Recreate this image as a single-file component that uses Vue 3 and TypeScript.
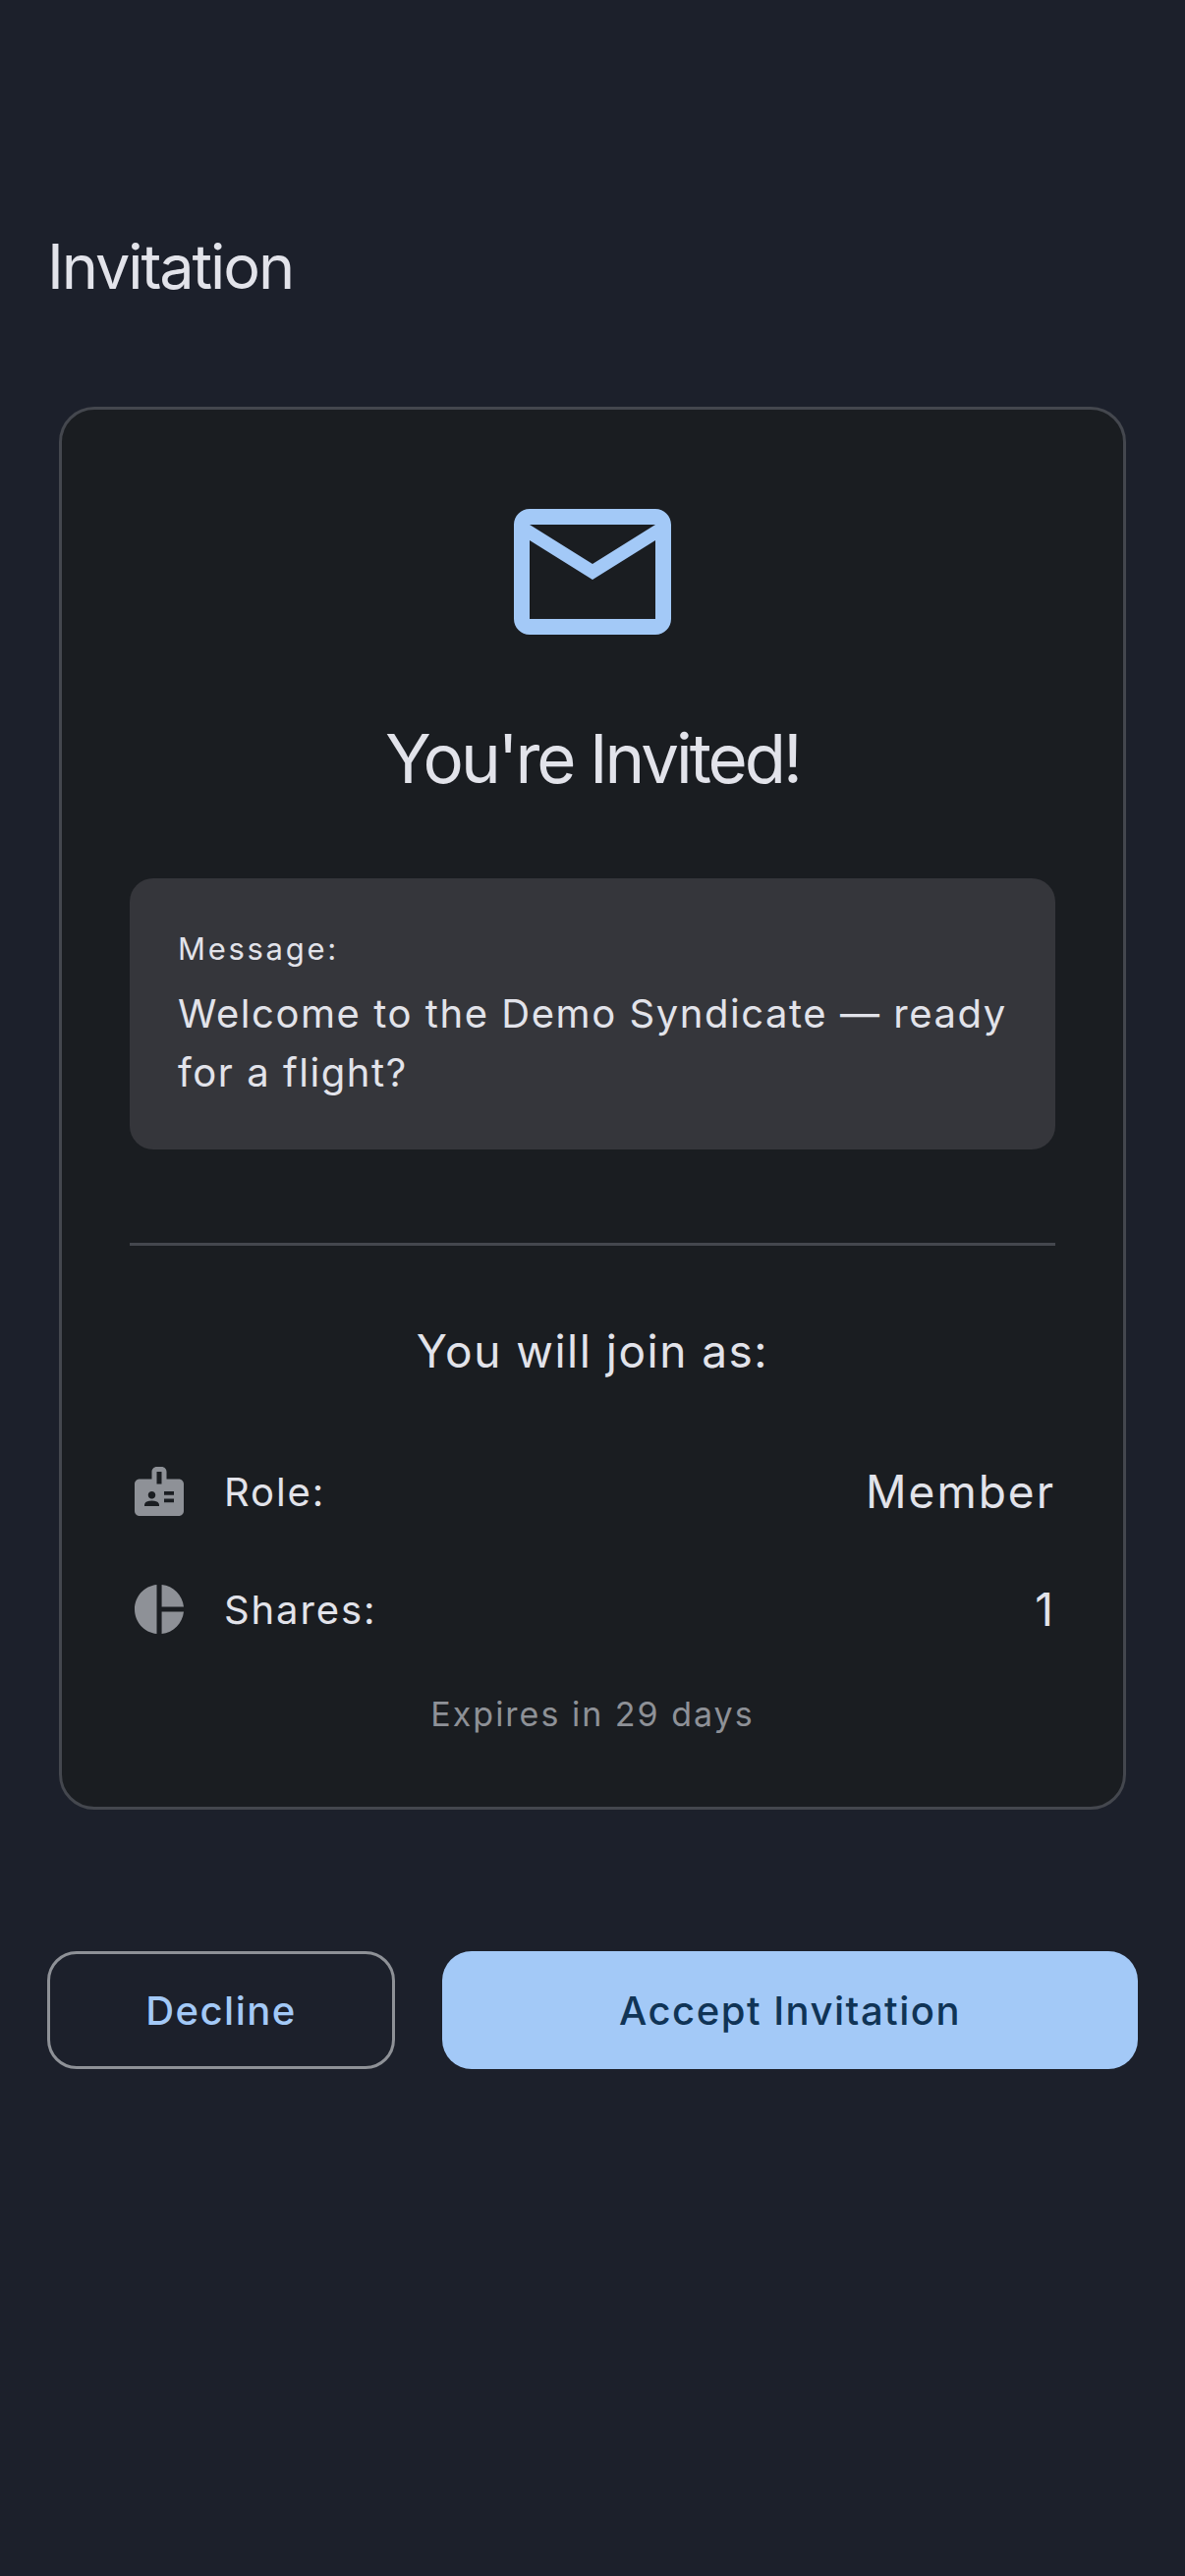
<template>
  <div class="page">
    <h1 class="title">Invitation</h1>

    <div class="card">
      <svg class="mail" viewBox="0 0 24 24">
        <path d="M20 4H4c-1.1 0-2 .9-2 2v12c0 1.1.9 2 2 2h16c1.1 0 2-.9 2-2V6c0-1.1-.9-2-2-2zm0 14H4V8l8 5 8-5v10zm-8-7L4 6h16l-8 5z" />
      </svg>
      <h2 class="heading">You're Invited!</h2>

      <div class="message">
        <div class="message-label">Message:</div>
        <div class="message-text">Welcome to the Demo Syndicate — ready for a flight?</div>
      </div>

      <div class="divider"></div>

      <div class="join">You will join as:</div>

      <div v-for="row in rows" :key="row.label" class="row">
        <svg class="row-icon" viewBox="0 0 24 24"><path :d="row.icon" /></svg>
        <span class="row-label">{{ row.label }}</span>
        <span class="row-value">{{ row.value }}</span>
      </div>

      <div class="expires">Expires in 29 days</div>
    </div>

    <div class="actions">
      <button class="btn decline">Decline</button>
      <button class="btn accept">Accept Invitation</button>
    </div>
  </div>
</template>

<script setup lang="ts">
const rows = [
  {
    label: "Role:",
    value: "Member",
    icon: "M20 7h-5V4c0-1.1-.9-2-2-2h-2c-1.1 0-2 .9-2 2v3H4c-1.1 0-2 .9-2 2v11c0 1.1.9 2 2 2h16c1.1 0 2-.9 2-2V9c0-1.1-.9-2-2-2zM9 12c.83 0 1.5.67 1.5 1.5S9.83 15 9 15s-1.5-.67-1.5-1.5S8.17 12 9 12zm3 6H6v-.43c0-.6.36-1.15.92-1.39.64-.28 1.34-.43 2.08-.43s1.44.15 2.08.43c.55.24.92.78.92 1.39V18zm1-9h-2V4h2v5zm5 7.5h-4V15h4v1.5zm0-3h-4V12h4v1.5z",
  },
  {
    label: "Shares:",
    value: "1",
    icon: "M11 2v20c-5.07-.5-9-4.79-9-10s3.93-9.5 9-10zm2.03 0v8.99H22c-.47-4.74-4.24-8.52-8.97-8.99zm0 11.01V22c4.74-.47 8.5-4.25 8.97-8.99h-8.97z",
  },
];
</script>

<style>
html,
body {
  margin: 0;
  background: #1c202b;
}
</style>

<style scoped>
.page {
  width: 1206px;
  height: 2622px;
  box-sizing: border-box;
  padding: 227px 48px 0;
  background: #1c202b;
  font-family: Inter, "Noto Sans", sans-serif;
  color: #e2e3ea;
}

.title {
  margin: 0 0 97px;
  font-size: 63px;
  line-height: 88px;
  font-weight: 400;
  letter-spacing: -2.1px;
  padding-bottom: 2px;
}

/* CARD */
.card {
  margin: 0 12px;
  height: 1428px;
  box-sizing: border-box;
  padding: 69px 69px 0;
  background: #1a1d21;
  border: 3px solid #44474e;
  border-radius: 36px;
  display: flex;
  flex-direction: column;
}

.mail {
  width: 192px;
  height: 192px;
  align-self: center;
  fill: #a3c9f7;
  flex: none;
}

.heading {
  margin: 46px 0 74px;
  font-size: 69px;
  line-height: 96px;
  font-weight: 400;
  letter-spacing: -3px;
  text-align: center;
}

/* MESSAGE */
.message {
  height: 276px;
  box-sizing: border-box;
  padding: 54px 44px 0 49px;
  background: #35363b;
  border-radius: 24px;
  flex: none;
}

.message-label {
  font-size: 31px;
  line-height: 36px;
  letter-spacing: 2.7px;
  margin-bottom: 18px;
}

.message-text {
  font-size: 40px;
  line-height: 60px;
  letter-spacing: 1.55px;
}

.divider {
  height: 3px;
  background: #44474e;
  margin: 95px 0 74px;
  flex: none;
}

.join {
  font-size: 46px;
  line-height: 66px;
  letter-spacing: 1.5px;
  text-align: center;
  margin-bottom: 74px;
}

/* ROWS */
.row {
  display: flex;
  align-items: center;
  height: 72px;
  margin-bottom: 48px;
}

.row-icon {
  width: 60px;
  height: 60px;
  fill: #8e9197;
  margin-right: 36px;
  flex: none;
}

.row-label {
  flex: 1;
  font-size: 40px;
  letter-spacing: 1.9px;
}

.row-value {
  font-size: 46px;
  letter-spacing: 2px;
}

.expires {
  font-size: 34px;
  line-height: 48px;
  letter-spacing: 2px;
  text-align: center;
  color: #8e9197;
  margin-top: -1px;
}

/* ACTIONS */
.actions {
  display: flex;
  gap: 48px;
  margin-top: 144px;
}

.btn {
  height: 120px;
  box-sizing: border-box;
  font-family: inherit;
  font-size: 40px;
  font-weight: 500;
  letter-spacing: 1.5px;
  border-radius: 30px;
}

.decline {
  width: 354px;
  background: transparent;
  border: 3px solid #8e9197;
  color: #a3c9f7;
}

.accept {
  flex: 1;
  background: #a3c9f7;
  border: none;
  color: #103456;
}
</style>
